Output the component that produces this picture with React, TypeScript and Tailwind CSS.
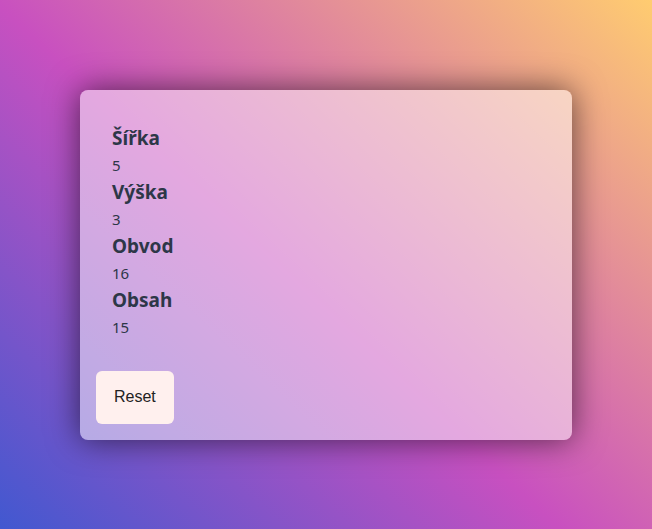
import React, { useState } from "react";

export default function App() {
  const [w] = useState(5);
  const [h] = useState(3);
  const items = [
    { label: "Šířka", value: w },
    { label: "Výška", value: h },
    { label: "Obvod", value: 2 * (w + h) },
    { label: "Obsah", value: w * h },
  ];
  return (
    <div className="min-h-screen w-full flex items-center justify-center bg-[linear-gradient(43deg,#4158D0_0%,#C850C0_46%,#FFCC70_100%)]">
      <div className="w-[492px] h-[350px] rounded-lg bg-white/50 shadow-[0_0_32px_rgba(0,0,0,0.6)] p-4 flex flex-col justify-between">
        <div className="px-4 pt-[19px] flex flex-col text-[#2d3748] font-['Noto_Sans',sans-serif]">
          {items.map((it) => (
            <div key={it.label} className="flex flex-col">
              <div className="text-[19px] font-bold leading-[26px]">{it.label}</div>
              <div className="text-[15px] leading-[28px]">{it.value}</div>
            </div>
          ))}
        </div>
        <div>
          <button className="h-[53px] px-[18px] rounded-md bg-[#fff0ee] text-[#222] text-[16px] font-['Liberation_Sans',Arial,sans-serif]">
            Reset
          </button>
        </div>
      </div>
    </div>
  );
}
